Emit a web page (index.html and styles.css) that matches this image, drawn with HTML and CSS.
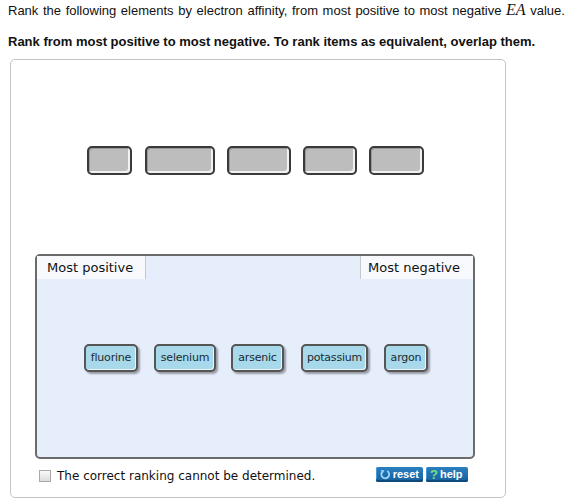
FILE: index.html
```html
<!DOCTYPE html>
<html lang="en">
<head>
  <meta charset="UTF-8" />
  <title>Ranking</title>
  <link rel="stylesheet" href="styles.css">
</head>
<body>

<p class="question">Rank the following elements by electron affinity, from most positive to most negative <span class="math">EA</span> value.</p>
<p class="instructions">Rank from most positive to most negative. To rank items as equivalent, overlap them.</p>

<div class="panel">
  <!-- empty slots -->
  <div class="slots">
    <div class="slot w45"></div>
    <div class="slot w70"></div>
    <div class="slot w64"></div>
    <div class="slot w54"></div>
    <div class="slot w55"></div>
  </div>

  <!-- bin with the draggable items -->
  <div class="bin">
    <div class="bin-head">
      <span class="label left">Most positive</span>
      <span class="label right">Most negative</span>
    </div>
    <div class="chips">
      <div class="chip c54">fluorine</div>
      <div class="chip c62">selenium</div>
      <div class="chip c53">arsenic</div>
      <div class="chip c67">potassium</div>
      <div class="chip c44">argon</div>
    </div>
  </div>

  <div class="footer">
    <span class="check"></span>
    <span class="check-text">The correct ranking cannot be determined.</span>
    <div class="tools">
      <button class="tool">
        <svg width="11" height="11" viewBox="0 0 11 11"><path d="M3 2.2 A4 4 0 1 0 7.5 2" fill="none" stroke="#9fd8ff" stroke-width="1.8"/><path d="M0.8 0.8 L4.6 1.2 L2.6 4.2 Z" fill="#9fd8ff"/></svg>
        reset
      </button>
      <button class="tool"><span class="q">?</span> help</button>
    </div>
  </div>
</div>

</body>
</html>
```

FILE: styles.css
```css
html, body {
  margin: 0;
  padding: 0;
  background: white;
}

body {
  padding: 2px 8px 0 8px;
  font-family: 'Liberation Sans', Arial, sans-serif;
  font-size: 13px;
  color: #111;
}

.question {
  margin: 0;
  line-height: 15px;
  word-spacing: 1px;
  white-space: nowrap;
}

.math {
  font-family: 'Liberation Serif', serif;
  font-style: italic;
  font-size: 16px;
}

.instructions {
  margin: 16px 0 0 0;
  font-weight: bold;
  line-height: 16px;
}

.panel {
  margin: 9px 0 0 2px;
  width: 470px;
  height: 437px;
  border: 1px solid #c4c4c4;
  border-radius: 5px;
  padding-left: 24px;
  box-sizing: content-box;
}

.slots {
  display: flex;
  gap: 12px;
  margin: 86px 0 0 52px;
  height: 29px;
}

.slot {
  height: 29px;
  box-sizing: border-box;
  border: 2px solid #3a3a3a;
  border-radius: 5px;
  background: #bdbdbd;
  box-shadow: inset -2px -2px 0 #f2f2f2, inset 1px 1px 0 #9a9a9a;
}

.w45 { width: 45px; }
.w70 { width: 70px; margin-left: 1px; }
.w64 { width: 64px; }
.w54 { width: 54px; }
.w55 { width: 55px; }

.bin {
  margin-top: 79px;
  width: 440px;
  height: 205px;
  box-sizing: border-box;
  border: 2px solid #6a6a6a;
  border-radius: 5px;
  background: #e6edfb;
}

.bin-head {
  display: flex;
  justify-content: space-between;
  height: 23px;
}

.label {
  background: #f8f9fd;
  font-family: 'DejaVu Sans', Verdana, sans-serif;
  font-size: 13px;
  line-height: 23px;
  color: #111;
}

.label.left {
  width: 109px;
  padding-left: 10px;
  box-sizing: border-box;
  border-right: 1px solid #c9c9c9;
}

.label.right {
  width: 113px;
  padding-left: 7px;
  box-sizing: border-box;
  border-left: 1px solid #c9c9c9;
}

.chips {
  display: flex;
  margin: 65px 0 0 47px;
}

.chip {
  height: 28px;
  box-sizing: border-box;
  margin-right: 16px;
  border: 2px solid #555;
  border-radius: 5px;
  background: #a7d9ea;
  box-shadow: 2px 2px 2px rgba(0, 0, 0, 0.35), inset -1px -1px 0 #e8f6fb;
  font-family: 'DejaVu Sans', Verdana, sans-serif;
  font-size: 11px;
  letter-spacing: -0.2px;
  line-height: 24px;
  text-align: center;
  color: #1c2a33;
}

.c54 { width: 54px; }
.c62 { width: 62px; margin-right: 15px; }
.c53 { width: 53px; margin-right: 17px; }
.c67 { width: 67px; }
.c44 { width: 44px; }

.footer {
  display: flex;
  align-items: center;
  width: 440px;
  height: 15px;
  margin-top: 8px;
}

.check {
  width: 12px;
  height: 12px;
  box-sizing: border-box;
  margin: 3px 0 0 4px;
  border: 1px solid #a9a9a9;
  background: linear-gradient(#fafafa, #dcdcdc);
}

.check-text {
  margin: 2px 0 0 6px;
  font-family: 'DejaVu Sans', Verdana, sans-serif;
  font-size: 12px;
  color: #111;
}

.tools {
  display: flex;
  gap: 3px;
  margin-left: auto;
  margin-right: 7px;
}

.tool {
  display: flex;
  align-items: center;
  gap: 2px;
  height: 15px;
  padding: 0 4px;
  border: none;
  border-radius: 2px;
  background: linear-gradient(#2a7fc0, #16609c);
  box-shadow: inset 0 -2px 0 #0e4a7c, inset 1px 0 0 #4a98d4;
  color: white;
  font-family: 'Liberation Sans', Arial, sans-serif;
  font-weight: bold;
  font-size: 11px;
  line-height: 15px;
}

.tool:first-child {
  width: 47px;
}

.tool:last-child {
  width: 42px;
}

.q {
  color: #74e27a;
  font-size: 13px;
}
```
